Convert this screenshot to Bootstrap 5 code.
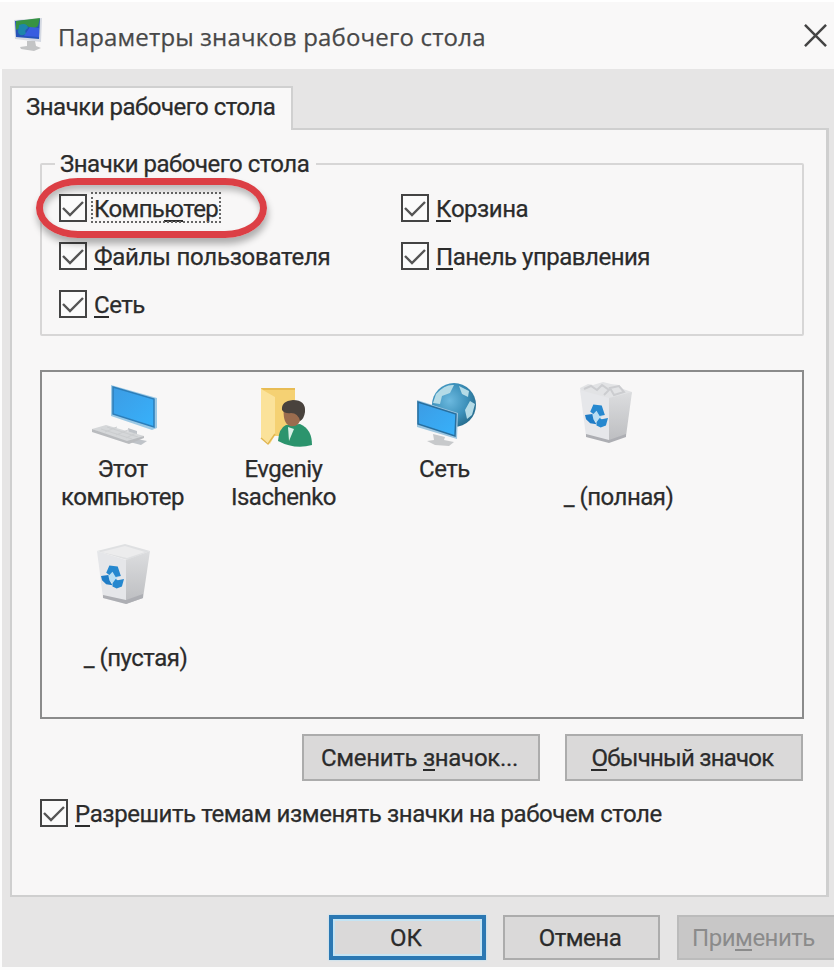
<!DOCTYPE html>
<html lang="ru">
<head>
  <meta charset="UTF-8" />
  <meta name="viewport" content="width=device-width, initial-scale=1.0"/>
  <title>Параметры значков рабочего стола</title>
  <link href="https://cdn.jsdelivr.net/npm/bootstrap@5.3.0/dist/css/bootstrap.min.css" rel="stylesheet">
  <style>
    body { width: 834px; height: 970px; overflow: hidden; background: #fcfcfc; color: #2b2b2b; font: 24px/28px Roboto, "Noto Sans", sans-serif; letter-spacing: -.5px; -webkit-text-stroke: .25px currentColor; }
    u { text-decoration: none; border-bottom: 2px solid currentColor; display: inline-block; line-height: 22px; }

    .titlebar { height: 69px; padding: 0 7px 1px 11px; background: #f9f8f8; border-top: 2px solid #fff; }
    .titlebar h1 { font: 24px/32px "Open Sans", "Noto Sans", sans-serif; letter-spacing: .17px; color: #484848; margin-left: 13px; padding-top: 3px; }
    .dialog-body { height: 898px; margin-left: 2px; padding: 17px 4px 0 8px; background: #e6e5e5; }

    .tab-head { width: 283px; height: 44px; padding: 5px 0 0 14px; margin-bottom: -2px; background: #f9f8f8; border: 2px solid #d0d0d0; border-bottom: 0; position: relative; z-index: 1; }
    .tab-page { width: 819px; height: 769px; padding: 33px 22px 0 28px; background: #f8f7f7; border: 2px solid #cfcfcf; border-right-width: 3px; }

    .group { height: 173px; border: 2px solid #d7d6d6; border-radius: 2px; position: relative; padding: 29px 0 0 17px; }
    .group-title { position: absolute; top: -15px; left: 13px; padding: 0 7px 0 5px; background: #f8f7f7; line-height: 28px; }
    .group-col { width: 342px; }
    .option { height: 28px; margin-bottom: 20px; }
    .option svg { width: 28px; height: 28px; flex: none; margin-right: 7px; }
    .option span { white-space: nowrap; padding-top: 1px; }
    .wide-text { letter-spacing: -.25px; }
    .themes-option { margin-top: 18px; letter-spacing: -.42px; }
    .focused { position: relative; letter-spacing: -.65px; }
    .focused::after { content: ""; position: absolute; left: -3px; right: -3px; top: -2px; height: 31px; border: 2px dotted #666; }
    .marker { position: absolute; left: -6px; top: 13px; width: 231px; height: 60px; border: 7px solid #dc3f45; border-radius: 42px / 30px; box-shadow: 1px 6px 7px rgba(0,0,0,.3), inset 1px 5px 6px rgba(0,0,0,.25); }

    .icon-list { height: 349px; margin-top: 34px; border: 2px solid #8b8b8b; padding: 9px 0 0 0; align-content: flex-start; }
    .icon-cell { width: 161px; height: 161px; text-align: center; }
    .icon-cell svg { display: block; width: 72px; height: 72px; margin: 0 auto 2px; }
    .bin-name { padding-left: 26px; }

    .win-btn { height: 47px; display: flex; align-items: center; justify-content: center; background: #dad9d9; border: 2px solid #acacac; color: #2b2b2b; padding: 0; font-size: 24px; letter-spacing: -.5px; }
    .actions { margin: 15px 1px 0 0; gap: 25px; }
    .actions .win-btn { width: 238px; letter-spacing: -.3px; padding-right: 3px; }
    .actions .tight-text { letter-spacing: -.75px; }
    .footer-row { margin-top: 18px; gap: 17px; margin-left: 319px; }
    .footer-row .win-btn { height: 45px; width: 157px; flex: none; padding-right: 3px; }
    .footer-row .ok-btn { border: 4px solid #2b78b3; box-shadow: inset 0 0 0 2px #c4e4f4, 0 0 2px #a8e0fa; letter-spacing: 0; }
    .footer-row .off-btn { width: 159px; background: #c8c7c7; border-color: #bbb; color: #8b8b8b; padding-right: 6px; -webkit-text-stroke: 0; }
  </style>
</head>
<body>
  <!-- shared shapes -->
  <svg width="0" height="0" class="position-absolute">
    <defs>
      <linearGradient id="screen" x1="0" y1="0" x2="1" y2="1"><stop offset="0" stop-color="#3c9ce4"/><stop offset="1" stop-color="#37b1fb"/></linearGradient>
      <linearGradient id="side" x1="0" y1="0" x2="0" y2="1"><stop offset="0" stop-color="#dcdddf"/><stop offset="1" stop-color="#bcbdc0"/></linearGradient>
      <radialGradient id="globe" cx=".4" cy=".4" r=".65"><stop offset="0" stop-color="#6cb9df"/><stop offset=".6" stop-color="#3d91bb"/><stop offset="1" stop-color="#276c8d"/></radialGradient>
      <symbol id="check" viewBox="0 0 28 28">
        <rect x="1" y="1" width="26" height="26" fill="#fbfbfb" stroke="#444" stroke-width="2"/>
        <path d="M4 14l7 7L24 8" fill="none" stroke="#555" stroke-width="2.4"/>
      </symbol>
      <symbol id="recycle" viewBox="0 0 22 24">
        <path d="M7 10l4-3 5 5-3 7-6-4z" fill="#b9def3"/>
        <path d="M5 8l3-7 8 1 3 9-5 1-3-5-3 3z" fill="#2688cf"/>
        <path d="M0 11l7-1 1 5 3 5-6-1-4-4z" fill="#1f7cc6"/>
        <path d="M11 18l3-4 2 1 6-1-2 7-5 2-4-2z" fill="#2688cf"/>
      </symbol>
    </defs>
  </svg>

  <header class="titlebar d-flex align-items-center">
    <svg width="34" height="38" viewBox="0 0 34 38">
      <path d="M3 4l28-2-1 24-26-3z" fill="#d5d9e2"/>
      <path d="M4 5l25-2-1 20-23-2z" fill="#2754b8"/>
      <path d="M5 5l24-3-2 8q-5 4-9 1-5-3-9 1l-4 2z" fill="#379344"/>
      <path d="M8 9q8-3 9 3-5 3-1 6-8 3-9-2z" fill="#1d86aa"/>
      <path d="M19 11l9 1v9l-15-1z" fill="#385de0"/>
      <path d="M16 25h8l1 5 5 2-7 3-13-2-1-2 7-1z" fill="#c3c4c5"/>
    </svg>
    <h1 class="mb-0">Параметры значков рабочего стола</h1>
    <svg class="ms-auto" width="23" height="23" viewBox="0 0 24 24"><path d="M1 1l22 22M23 1L1 23" stroke="#444" stroke-width="2.6"/></svg>
  </header>

  <main class="dialog-body">
    <div class="tab-head">Значки рабочего стола</div>
    <section class="tab-page">
      <div class="group d-flex">
        <div class="group-title">Значки рабочего стола</div>
        <div class="group-col">
          <div class="option d-flex"><svg><use href="#check"/></svg><span class="focused">Компь<u>ю</u>тер</span></div>
          <div class="option d-flex"><svg><use href="#check"/></svg><span class="wide-text"><u>Ф</u>айлы пользователя</span></div>
          <div class="option d-flex"><svg><use href="#check"/></svg><span><u>С</u>еть</span></div>
        </div>
        <div class="group-col">
          <div class="option d-flex"><svg><use href="#check"/></svg><span><u>К</u>орзина</span></div>
          <div class="option d-flex"><svg><use href="#check"/></svg><span><u>П</u>анель управления</span></div>
        </div>
        <div class="marker"></div>
      </div>

      <div class="icon-list d-flex flex-wrap">
        <div class="icon-cell">
          <svg viewBox="0 0 72 72">
            <path d="M41 47l9 3v8l10 2-6 4-19-5 1-3 6-1z" fill="#bfc3c8"/>
            <path d="M24 4l46 13v30l-5 2-41-14z" fill="#9cc9e5"/>
            <path d="M26 6l41 12v28L26 33z" fill="url(#screen)" stroke="#2d7eb9" stroke-width="1.5"/>
            <path d="M5 48l14-4 38 11-12 6-5 1z" fill="#d5d7d9"/>
            <path d="M5 48l35 12 17-5v2l-15 6L5 51z" fill="#b9bbbe"/>
            <path d="M14 48l31 10M20 46l31 10M18 51l12-5M29 54l12-5M39 57l10-5" stroke="#cbcdcf" fill="none"/>
          </svg>
          Этот<br>компьютер
        </div>
        <div class="icon-cell">
          <svg viewBox="0 0 72 72">
            <path d="M13 7h34v48H13z" fill="#f5d173"/>
            <path d="M13 7h34v2H15z" fill="#e8bc54"/>
            <path d="M13 8l14 8v38l-5 9-9-6z" fill="#fbe29a"/>
            <path d="M13 57l7 6 7-10" stroke="#e2b64f" stroke-width="1.5" fill="none"/>
            <path d="M30 60q1-13 8-16l14-1q12 5 12 21-17 5-34-4z" fill="#2c946d"/>
            <path d="M40 46l1 14 5-12z" fill="#dcefe6"/>
            <path d="M36 25q-2 17 6 20 9 2 12-10l-3-11z" fill="#9b6c4e"/>
            <path d="M34 29q-1-9 11-10 13 0 12 12-1 7-5 9-2-8-9-8-6 1-9-3z" fill="#49423d"/>
          </svg>
          Evgeniy<br>Isachenko
        </div>
        <div class="icon-cell">
          <svg viewBox="0 0 72 72">
            <circle cx="45" cy="24" r="22" fill="url(#globe)"/>
            <path d="M27 13q9-10 18-9l-4 8-8 3-2 8-7-1zM50 5l10 5-1 6-6-3zM61 20l5 3-3 11-5 4-2-9z" fill="#b4dbe7"/>
            <path d="M24 53l12 3-1 3 10 2-5 4-14-1-8-4 7-1z" fill="#c7c9cb"/>
            <path d="M8 19l41 13-1 26L8 46z" fill="#9cc5df"/>
            <path d="M9 21l38 12-1 22L9 43z" fill="url(#screen)" stroke="#286f9f" stroke-width="1.5"/>
          </svg>
          Сеть
        </div>
        <div class="icon-cell">
          <svg viewBox="-2 0 72 72">
            <path d="M8 7l8-4 5 1 10-3 8 2 8 1 4 4 9 3-2 6-16 4L9 12z" fill="#e2e3e5"/>
            <path d="M8 9l29 8v44l-23-6z" fill="#e6e7ea"/>
            <path d="M37 17l23-6-6 44-17 6z" fill="url(#side)"/>
            <path d="M12 8l7-3 6 4 5-5 7 5-5 5M38 7l9-2 5 6-10 3z" fill="none" stroke="#cccdd0" stroke-width="2"/>
            <path d="M14 53l23 6 17-6v3l-17 6-23-6z" fill="#adaeb3"/>
            <use href="#recycle" x="13" y="22" width="23" height="26"/>
          </svg>
          <br><span class="bin-name">_ (полная)</span>
        </div>
        <div class="icon-cell">
          <svg viewBox="-2 0 72 72">
            <path d="M8 9l28-7 25 7-23 9z" fill="#dfe0e2"/>
            <path d="M12 10l24-6 20 6-18 6z" fill="#ececed"/>
            <path d="M8 9l29 9v44l-23-6z" fill="#e5e6e9"/>
            <path d="M37 18l24-9-7 47-17 6z" fill="url(#side)"/>
            <path d="M14 53l23 5 17-6v4l-17 6-23-6z" fill="#adaeb3"/>
            <use href="#recycle" x="12" y="22" width="23" height="26"/>
          </svg>
          <br><span class="bin-name">_ (пустая)</span>
        </div>
      </div>

      <div class="actions d-flex justify-content-end">
        <button type="button" class="btn rounded-0 win-btn"><span>Сменить <u>з</u>начок...</span></button>
        <button type="button" class="btn rounded-0 win-btn tight-text"><span><u>О</u>бычный значок</span></button>
      </div>
      <div class="option themes-option d-flex"><svg><use href="#check"/></svg><span><u>Р</u>азрешить темам изменять значки на рабочем столе</span></div>
    </section>

    <footer class="footer-row d-flex">
      <button type="button" class="btn rounded-0 win-btn ok-btn">ОК</button>
      <button type="button" class="btn rounded-0 win-btn">Отмена</button>
      <button type="button" class="btn rounded-0 win-btn off-btn"><span>При<u>м</u>енить</span></button>
    </footer>
  </main>
  <script src="https://cdn.jsdelivr.net/npm/bootstrap@5.3.0/dist/js/bootstrap.bundle.min.js"></script>
</body>
</html>
